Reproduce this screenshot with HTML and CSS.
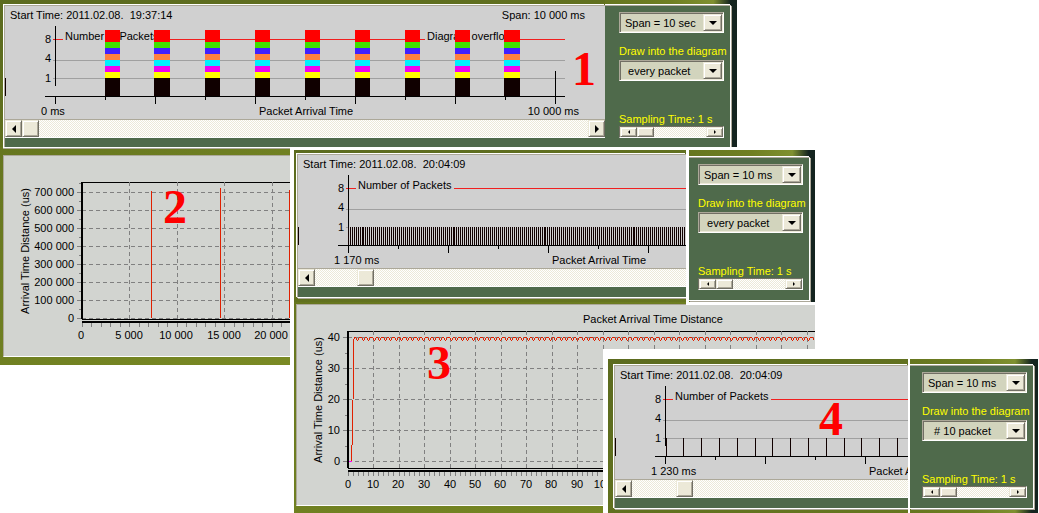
FILE: index.html
```html
<!DOCTYPE html>
<html lang="en">
<head>
<meta charset="utf-8">
<title>Packet arrival diagrams</title>
<link rel="stylesheet" href="styles.css">
</head>
<body>
<main class="desktop">

  <section class="window win-1" aria-label="Diagram 1">
    <div class="pane chart-pane">
      <div class="frame">
        <svg class="chart" role="img" aria-label="Number of packets">
          <g transform="translate(-5 -6)">
            <g data-plot="overflow"></g>
            <text x="10" y="19">Start Time: 2011.02.08.  19:37:14</text>
            <text x="585" y="19" class="end">Span: 10 000 ms</text>
            <text x="51" y="43" class="end">8</text>
            <text x="51" y="62" class="end">4</text>
            <text x="51" y="82" class="end">1</text>
            <text x="65" y="40">Number of Packets</text>
            <text x="427" y="40">Diagram overflow</text>
            <g data-plot="stacks"></g>
            <text x="41" y="115">0 ms</text>
            <text x="259" y="115">Packet Arrival Time</text>
            <text x="579" y="115" class="end">10 000 ms</text>
            <text x="572" y="85" class="mark">1</text>
          </g>
        </svg>
        <div class="scroll">
          <button class="arrow left" aria-label="Scroll left"></button>
          <input type="range" aria-label="Diagram position" min="0" max="1000" value="0">
          <button class="arrow right" aria-label="Scroll right"></button>
        </div>
      </div>
    </div>
    <div class="pane control-pane">
      <div class="frame controls">
        <span class="combo"><select aria-label="Span"><option>Span = 10 sec</option></select></span>
        <label for="draw1">Draw into the diagram</label>
        <span class="combo"><select id="draw1"><option>&nbsp;every packet</option></select></span>
        <label for="samp1" class="sampling">Sampling Time: 1 s</label>
        <div class="scroll small">
          <button class="arrow left" aria-label="Less"></button>
          <input id="samp1" type="range" min="0" max="100" value="0">
          <button class="arrow right" aria-label="More"></button>
        </div>
      </div>
    </div>
  </section>

  <section class="window win-2" aria-label="Diagram 2">
    <div class="rule"></div>
    <div class="sheet">
      <svg role="img" aria-label="Arrival time distance">
        <g transform="translate(-4 -156)">
          <g data-plot="distance-wide"></g>
          <g class="end">
            <text x="74" y="196">700 000</text>
            <text x="74" y="214">600 000</text>
            <text x="74" y="232">500 000</text>
            <text x="74" y="250">400 000</text>
            <text x="74" y="268">300 000</text>
            <text x="74" y="286">200 000</text>
            <text x="74" y="304">100 000</text>
            <text x="74" y="322">0</text>
          </g>
          <g class="mid">
            <text x="81" y="339">0</text>
            <text x="129" y="339">5 000</text>
            <text x="176" y="339">10 000</text>
            <text x="224" y="339">15 000</text>
            <text x="271" y="339">20 000</text>
            <text transform="translate(29 251) rotate(-90)">Arrival Time Distance (us)</text>
          </g>
          <text x="163" y="223" class="mark">2</text>
        </g>
      </svg>
    </div>
  </section>

  <section class="window win-3-distance" aria-label="Diagram 3, arrival time distance">
    <div class="sheet">
      <svg role="img" aria-label="Packet arrival time distance">
        <g transform="translate(-297 -305)">
          <g data-plot="distance-near"></g>
          <text x="583" y="323">Packet Arrival Time Distance</text>
          <g class="end">
            <text x="340" y="341">40</text>
            <text x="340" y="372">30</text>
            <text x="340" y="403">20</text>
            <text x="340" y="434">10</text>
            <text x="340" y="465">0</text>
          </g>
          <g class="mid">
            <text x="348" y="488">0</text>
            <text x="373" y="488">10</text>
            <text x="398" y="488">20</text>
            <text x="424" y="488">30</text>
            <text x="450" y="488">40</text>
            <text x="475" y="488">50</text>
            <text x="500" y="488">60</text>
            <text x="526" y="488">70</text>
            <text x="551" y="488">80</text>
            <text x="577" y="488">90</text>
            <text x="603" y="488">100</text>
            <text transform="translate(322 400) rotate(-90)">Arrival Time Distance (us)</text>
          </g>
          <text x="427" y="379" class="mark">3</text>
        </g>
      </svg>
    </div>
  </section>

  <section class="window win-3" aria-label="Diagram 3">
    <div class="pane chart-pane">
      <div class="frame">
        <svg class="chart" role="img" aria-label="Number of packets">
          <g transform="translate(-5 -6)">
            <g data-plot="dense"></g>
            <text x="10" y="19">Start Time: 2011.02.08.  20:04:09</text>
            <text x="51" y="43" class="end">8</text>
            <text x="51" y="62" class="end">4</text>
            <text x="51" y="82" class="end">1</text>
            <text x="65" y="40">Number of Packets</text>
            <text x="41" y="115">1 170 ms</text>
            <text x="259" y="115">Packet Arrival Time</text>
          </g>
        </svg>
        <div class="scroll">
          <button class="arrow left" aria-label="Scroll left"></button>
          <input type="range" aria-label="Diagram position" min="0" max="1000" value="119">
        </div>
      </div>
    </div>
    <div class="pane control-pane">
      <div class="frame controls">
        <span class="combo"><select aria-label="Span"><option>Span = 10 ms</option></select></span>
        <label for="draw3">Draw into the diagram</label>
        <span class="combo"><select id="draw3"><option>&nbsp;every packet</option></select></span>
        <label for="samp3" class="sampling">Sampling Time: 1 s</label>
        <div class="scroll small">
          <button class="arrow left" aria-label="Less"></button>
          <input id="samp3" type="range" min="0" max="100" value="0">
          <button class="arrow right" aria-label="More"></button>
        </div>
      </div>
    </div>
  </section>

  <section class="window win-4" aria-label="Diagram 4">
    <div class="pane chart-pane">
      <div class="frame">
        <svg class="chart" role="img" aria-label="Number of packets">
          <g transform="translate(-5 -6)">
            <g data-plot="sparse"></g>
            <text x="10" y="19">Start Time: 2011.02.08.  20:04:09</text>
            <text x="51" y="43" class="end">8</text>
            <text x="51" y="62" class="end">4</text>
            <text x="51" y="82" class="end">1</text>
            <text x="65" y="40">Number of Packets</text>
            <text x="41" y="115">1 230 ms</text>
            <text x="259" y="115">Packet A</text>
            <text x="209" y="75" class="mark">4</text>
          </g>
        </svg>
        <div class="scroll">
          <button class="arrow left" aria-label="Scroll left"></button>
          <input type="range" aria-label="Diagram position" min="0" max="1000" value="170">
        </div>
      </div>
    </div>
    <div class="pane control-pane">
      <div class="frame controls">
        <span class="combo"><select aria-label="Span"><option>Span = 10 ms</option></select></span>
        <label for="draw4">Draw into the diagram</label>
        <span class="combo"><select id="draw4"><option>&nbsp;&nbsp;# 10 packet</option></select></span>
        <label for="samp4" class="sampling">Sampling Time: 1 s</label>
        <div class="scroll small">
          <button class="arrow left" aria-label="Less"></button>
          <input id="samp4" type="range" min="0" max="100" value="0">
          <button class="arrow right" aria-label="More"></button>
        </div>
      </div>
    </div>
  </section>

</main>
<script src="plots.js"></script>
</body>
</html>
```
FILE: plots.js
```js
const NS = 'http://www.w3.org/2000/svg';
const group = name => document.querySelector('[data-plot="' + name + '"]');

function add(parent, tag, attrs) {
  const el = document.createElementNS(NS, tag);
  for (const key in attrs) el.setAttribute(key, attrs[key]);
  parent.appendChild(el);
}
function rect(g, x, y, width, height, fill) {
  add(g, 'rect', { x, y, width, height, fill });
}

/* Level lines, axes and time ticks shared by the packet counters. */
function counter(name, right, gaps) {
  const g = group(name);
  let x = 53;
  for (const [from, to] of gaps) {
    rect(g, x, 39, from - x, 1, '#f02020');
    x = to;
  }
  rect(g, x, 39, right - x, 1, '#f02020');
  rect(g, 53, 60, right - 53, 1, '#a0a0a0');
  rect(g, 53, 78, right - 53, 1, '#a0a0a0');
  rect(g, 55, 26, 1, 60, '#000');
  rect(g, 45, 96, right - 45, 1, '#000');
  rect(g, 5, 78, 1, 18, '#100000');
  for (let t = 55, i = 0; t < right; t += 50, i++) {
    rect(g, t, 96, 1, i % 2 ? 4 : 8, '#000');
  }
  return g;
}

/* 1: every burst overflows the diagram */
const over = counter('overflow', 565, [[63, 160], [425, 519]]);
rect(over, 555, 71, 1, 26, '#000');
const layers = [
  [30, 12, '#ff0000'], [42, 6, '#40e000'], [48, 6, '#4020ff'], [54, 6, '#ff8040'],
  [60, 6, '#00f0ff'], [66, 6, '#f000f0'], [72, 6, '#ffff00'], [78, 18, '#100000']
];
const bursts = [[105, 15], [154, 16], [205, 15], [255, 15], [305, 15], [355, 15], [405, 15], [455, 15], [504, 16]];
for (const [x, w] of bursts) {
  for (const [y, h, fill] of layers) rect(group('stacks'), x, y, w, h, fill);
}

/* 3: one packet every other pixel, doubled where the period slips */
const dense = counter('dense', 393, [[63, 161]]);
rect(dense, 56, 78, 337, 1, '#d0d0d0');
let slip = [69, 160, 251, 340];
for (let x = 55; x < 393; x += 2) {
  rect(dense, x, 78, 1, 18, '#100000');
  if (x >= slip[0]) {
    rect(dense, x + 1, 78, 1, 18, '#100000');
    x += 1;
    slip = slip.slice(1);
  }
}

/* 4: every tenth packet */
const sparse = counter('sparse', 298, [[63, 161]]);
for (const x of [56, 73, 91, 109, 127, 145, 162, 180, 198, 216, 234, 251, 269, 287]) {
  rect(sparse, x, 78, 1, 18, '#100000');
}

/* Grid and double-ruled axes of the distance diagrams. */
function distance(name, o) {
  const g = group(name);
  const dash = { stroke: '#808080', 'stroke-dasharray': '4 3' };
  for (const y of o.rows) {
    add(g, 'path', { d: `M${o.left} ${y}.5H${o.right}`, ...dash });
    rect(g, o.left - 5, y, 5, 1, '#808080');
    if (y - o.half > o.top) rect(g, o.left - 3, y - o.half, 3, 1, '#808080');
  }
  rect(g, o.left, o.top, o.right - o.left, 1, '#000');
  for (let i = 1; o.left + i * o.step < o.right; i++) {
    const x = Math.floor(o.left + i * o.step);
    add(g, 'path', { d: `M${x}.5 ${o.top}V${o.bottom}`, ...dash });
  }
  for (let i = 0; o.left + i * o.step / 5 < o.right; i++) {
    rect(g, Math.floor(o.left + i * o.step / 5), o.bottom + 4, 1, 4, '#808080');
  }
  rect(g, o.left - 1, o.top, 2, o.bottom - o.top, '#000');
  rect(g, o.left, o.bottom, o.right - o.left, 1, '#000');
  rect(g, o.left, o.bottom + 2, o.right - o.left, 2, '#000');
  return g;
}

/* 2 */
const wide = distance('distance-wide', {
  left: 82, right: 290, top: 182, bottom: 319, step: 47.6, half: 9,
  rows: [192, 210, 228, 246, 264, 282, 300, 318]
});
rect(wide, 151, 191, 1, 127, '#e02000');
rect(wide, 220, 188, 1, 130, '#e02000');
rect(wide, 289, 190, 1, 128, '#e02000');

/* 3 */
const near = distance('distance-near', {
  left: 348, right: 815, top: 331, bottom: 468, step: 25.5, half: 15,
  rows: [337, 368, 399, 430, 461]
});
let trace = 'M351.5 461.5L352.5 430L353.5 371V340';
let x = 354.5;
for (let i = 0; x < 815; i++) {
  trace += `L${x} 337.5h${i % 2 ? 2 : 1}l2 3`;
  x += i % 2 ? 6 : 5;
}
add(near, 'path', { d: trace, fill: 'none', stroke: '#e02000' });
rect(near, 349, 461, 3, 1, '#ff00ff');
```
FILE: styles.css
```css
:root {
  --face: #ece9d8;
  --shade: #aca899;
  --dark: #716f64;
  --green: #4f6a4b;
  --olive: #5c6b1f;
  --olive-light: #7a8a24;
}

* { box-sizing: border-box; }

body {
  margin: 0;
  background: #fff;
  color: #000;
  font: 11px/14px "Liberation Sans", Arial, sans-serif;
}

.desktop {
  position: relative;
  min-height: 513px;
}

/* Windows overlap freely on the desktop */
.window { position: absolute; display: flex; }
.win-1 { left: 0; top: 0; width: 737px; height: 147px; }
.win-2 { left: 0; top: 147px; width: 290px; height: 218px; }
.win-3-distance { left: 294px; top: 302px; width: 521px; height: 211px; }
.win-3 { left: 294px; top: 150px; width: 521px; align-items: flex-start; }
.win-4 { left: 603px; top: 349px; width: 436px; height: 164px; }

.win-2, .win-3-distance {
  flex-direction: column;
  background: linear-gradient(to bottom right, #66761f, var(--olive-light));
}
.win-2 { padding: 0 0 8px 3px; gap: 6px; }
.win-3-distance { padding: 2px 0 7px 2px; }
.win-4 { padding: 10px 1px 0 5px; background: #fff; gap: 2px; }

.rule {
  height: 2px;
  background: #fff;
  border-bottom: 1px solid var(--shade);
}
.sheet {
  flex: 1;
  display: flex;
  background: #d2d4d0;
  border: 1px solid;
  border-color: var(--shade) transparent #fff var(--shade);
  border-right: 0;
}

.pane { overflow: hidden; background: linear-gradient(to bottom right, var(--olive), #66761f); }
.chart-pane { flex: 1; min-width: 0; padding: 5px 0 0 4px; }
.control-pane {
  padding: 5px 6px 0 0;
  background: linear-gradient(to right, #66761f, #6f7f22 50%, #7f9030 82%, #14241f 95%);
}
.frame {
  display: flex;
  flex-direction: column;
  background: var(--green);
  border: 1px solid;
  border-color: var(--shade) #fff #fff var(--shade);
  box-shadow: -1px -1px 0 #fff, 1px 1px 0 var(--shade);
}
.chart-pane .frame { height: 144px; border-right: 0; }
.control-pane .frame { height: 144px; border-left: 0; }

.win-1 .control-pane { flex: 0 0 132px; }
.win-3 .chart-pane { padding: 4px 0 4px 3px; }
.win-3 .control-pane {
  flex: 0 0 129px;
  padding: 7px 5px 1px 0;
  border: solid #fff;
  border-width: 0 0 3px 3px;
}
.win-4 .chart-pane { padding: 6px 0 0 6px; }
.win-4 .control-pane { flex: 0 0 128px; padding: 6px 4px 0 0; }

/* Diagrams */
svg { display: block; width: 100%; }
.sheet svg { height: 100%; }
.chart {
  height: 114px;
  background: #d0d0d0;
  border-bottom: 1px solid var(--shade);
  flex: none;
}
rect, path { shape-rendering: crispEdges; }
text { white-space: pre; }
.end { text-anchor: end; }
.mid { text-anchor: middle; }
.mark {
  font: bold 48px "Liberation Serif", "Times New Roman", serif;
  fill: #f00;
}

/* Scroll bars */
.scroll {
  display: flex;
  height: 18px;
  border-bottom: 1px solid #fff;
  background: repeating-conic-gradient(#ece9d8 0 25%, #fff 0 50%) 0 0 / 2px 2px;
}
.scroll input {
  appearance: none;
  flex: 1;
  min-width: 0;
  height: 100%;
  margin: 0;
  background: none;
}
.scroll input::-webkit-slider-thumb {
  appearance: none;
  width: 17px;
  height: 17px;
  background: var(--face);
  border: 1px solid;
  border-color: var(--face) var(--dark) var(--dark) var(--face);
  box-shadow: inset 1px 1px #fff, inset -1px -1px var(--shade);
}
.arrow {
  display: grid;
  place-items: center;
  flex: none;
  width: 17px;
  padding: 0;
  background: var(--face);
  border: 1px solid;
  border-color: var(--face) var(--dark) var(--dark) var(--face);
  box-shadow: inset 1px 1px #fff, inset -1px -1px var(--shade);
}
.arrow::before {
  content: "";
  border: 4px solid transparent;
}
.arrow.left::before { border-left: 0; border-right-color: #000; }
.arrow.right::before { border-right: 0; border-left-color: #000; }

.scroll.small {
  height: 12px;
  border: 1px solid;
  border-color: var(--dark) #fff #fff var(--dark);
}
.small input::-webkit-slider-thumb { height: 10px; }
.small .arrow::before { border-width: 2px; }
.small .arrow.left::before { border-left: 0; }
.small .arrow.right::before { border-right: 0; }

/* Control column */
.controls { padding: 6px 6px 0 14px; }
.win-3 .controls { padding-left: 9px; }
.win-4 .controls { padding-left: 12px; }
.controls label {
  margin: 11px 0 2px;
  color: #ff0;
  white-space: nowrap;
}
.controls .sampling { margin: 31px 0 0; }

.combo { position: relative; display: flex; height: 21px; }
.combo select {
  appearance: none;
  width: 100%;
  padding: 0 18px 0 5px;
  font: inherit;
  color: #000;
  background: #d2d4bd;
  border: 1px solid;
  border-color: var(--shade) #fff #fff var(--shade);
  border-radius: 0;
  box-shadow: inset 1px 1px var(--dark), inset -1px -1px var(--face);
}
.combo::before {
  content: "";
  position: absolute;
  right: 2px;
  top: 2px;
  bottom: 2px;
  width: 17px;
  background: var(--face);
  border: 1px solid;
  border-color: var(--face) var(--dark) var(--dark) var(--face);
  box-shadow: inset 1px 1px #fff, inset -1px -1px var(--shade);
  pointer-events: none;
}
.combo::after {
  content: "";
  position: absolute;
  right: 7px;
  top: 9px;
  border: 4px solid transparent;
  border-top-color: #000;
  border-bottom: 0;
  pointer-events: none;
}
```
